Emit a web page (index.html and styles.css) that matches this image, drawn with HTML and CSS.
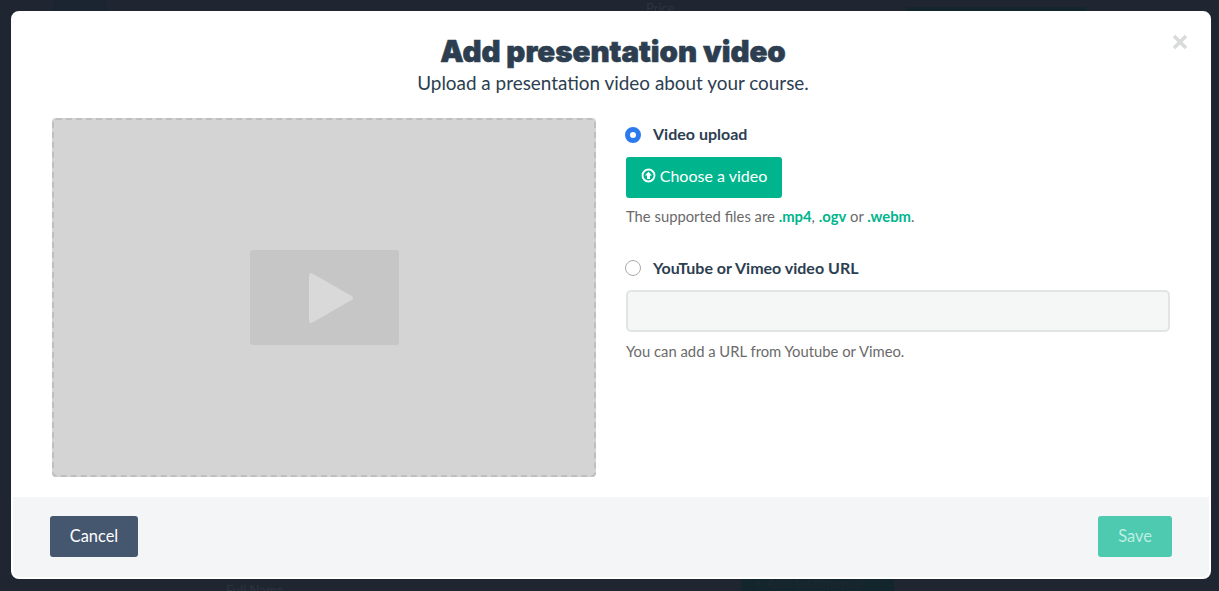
FILE: index.html
```html
<!DOCTYPE html>
<html lang="en">
<head>
<meta charset="UTF-8" />
<meta name="viewport" content="width=device-width, initial-scale=1.0" />
<title>Add presentation video</title>
<link rel="stylesheet" href="styles.css">
</head>
<body>

<!-- page behind the backdrop -->
<div class="behind">
  <div class="behind-avatar"></div>
  <span class="behind-price">Price</span>
  <div class="behind-top-btn"></div>
  <span class="behind-name">Full Name</span>
  <div class="behind-add-btn">+ Add testimonial</div>
</div>

<div class="modal">
  <button class="modal-close" aria-label="Close">
    <svg width="16" height="16" viewBox="0 0 16 16"><path d="M2 2 14 14M14 2 2 14" /></svg>
  </button>

  <div class="modal-head">
    <h1>Add presentation video</h1>
    <p>Upload a presentation video about your course.</p>
  </div>

  <div class="modal-body">
    <div class="preview">
      <div class="preview-thumb">
        <svg width="46" height="52" viewBox="0 0 46 52"><path d="M3 3 43 26 3 49Z" /></svg>
      </div>
    </div>

    <div class="options">
      <label class="option option-upload">
        <span class="radio radio-on"></span>
        Video upload
      </label>
      <button class="btn btn-green btn-choose">
        <svg width="15" height="15" viewBox="0 0 15 15">
          <circle cx="7.5" cy="7.5" r="6" />
          <path class="arrow" d="M7.5 3.8 11 7.5H9V11H6V7.5H4Z" />
        </svg>
        Choose a video
      </button>
      <p class="hint hint-types">The supported files are <b>.mp4</b>, <b>.ogv</b> or <b>.webm</b>.</p>

      <label class="option option-url">
        <span class="radio"></span>
        YouTube or Vimeo video URL
      </label>
      <input class="url-input" type="text" />
      <p class="hint">You can add a URL from Youtube or Vimeo.</p>
    </div>
  </div>

  <div class="modal-foot">
    <button class="btn btn-dark">Cancel</button>
    <button class="btn btn-save">Save</button>
  </div>
</div>

</body>
</html>
```

FILE: styles.css
```css
* {
  box-sizing: border-box;
}
html, body {
  height: 100%;
}
body {
  margin: 0;
  background-color: #1f2631;
  font-family: "Lato", "Open Sans", sans-serif;
  color: #2c3e50;
  overflow: hidden;
}

/* page behind the backdrop */
.behind-avatar {
  position: absolute;
  left: 53px;
  top: -20px;
  width: 54px;
  height: 54px;
  border-radius: 50%;
  background-color: #1b2531;
}
.behind-price {
  position: absolute;
  left: 646px;
  top: 0;
  font-size: 13px;
  color: #2c3440;
}
.behind-top-btn {
  position: absolute;
  left: 905px;
  top: 7px;
  width: 182px;
  height: 30px;
  border-radius: 4px;
  background-color: #13262e;
}
.behind-name {
  position: absolute;
  left: 226px;
  top: 582px;
  font-size: 13px;
  color: #2c3440;
}
.behind-add-btn {
  position: absolute;
  left: 741px;
  top: 570px;
  width: 153px;
  height: 30px;
  padding-left: 14px;
  background-color: #13262e;
  color: #1f2631;
  font-size: 14px;
  line-height: 26px;
}

.modal {
  position: absolute;
  left: 11px;
  top: 11px;
  width: 1200px;
  height: 568px;
  display: flex;
  flex-direction: column;
  background-color: #fff;
  border: 2px solid #fff;
  border-radius: 8px;
}
.modal-close {
  position: absolute;
  right: 21px;
  top: 21px;
  width: 16px;
  height: 16px;
  padding: 0;
  border: none;
  background: none;
}
.modal-close svg {
  display: block;
}
.modal-close path {
  stroke: #d8dadb;
  stroke-width: 3.6;
  fill: none;
}

.modal-head {
  height: 105px;
  padding: 20px 0 0 4px;
  text-align: center;
}
.modal-head h1 {
  margin: 0 0 1px;
  font-family: "Inter", "Lato", sans-serif;
  font-size: 29.5px;
  line-height: 36px;
  font-weight: 900;
  -webkit-text-stroke: 0.6px #2c3e50;
  color: #2c3e50;
}
.modal-head p {
  margin: 0;
  font-size: 18.9px;
  line-height: 26px;
  color: #2c3e50;
}

.modal-body {
  flex: 1;
  display: flex;
  gap: 30px;
  padding: 0 39px;
}
.preview {
  width: 544px;
  height: 359px;
  display: flex;
  align-items: center;
  justify-content: center;
  background-color: #d4d4d4;
  border: 2px dashed #bfbfbf;
  border-radius: 4px;
}
.preview-thumb {
  width: 149px;
  height: 95px;
  display: flex;
  align-items: center;
  justify-content: center;
  padding-left: 13px;
  background-color: #c6c6c6;
  border-radius: 3px;
}
.preview-thumb svg {
  display: block;
}
.preview-thumb path {
  fill: #d9d9d9;
  stroke: #d9d9d9;
  stroke-width: 4;
  stroke-linejoin: round;
}

.options {
  width: 544px;
}
.option {
  display: flex;
  align-items: center;
  gap: 12px;
  height: 20px;
  font-size: 16px;
  font-weight: 700;
  color: #2c3e50;
}
.option-upload {
  margin: 5px 0 14px -1px;
}
.option-url {
  margin: 31px 0 13px -1px;
}
.radio {
  width: 16px;
  height: 16px;
  margin-top: 2px;
  border-radius: 50%;
  background-color: #fff;
  border: 1px solid #aaa;
}
.radio-on {
  margin-top: 4px;
  background-color: #fff;
  border: 5px solid #2b7af0;
}

.btn {
  height: 41px;
  border: none;
  border-radius: 3px;
  font-family: inherit;
  font-size: 16.4px;
  color: #fff;
}
.btn-green {
  background-color: #00b58d;
}
.btn-choose {
  width: 156px;
  display: flex;
  align-items: center;
  justify-content: center;
  gap: 4px;
  padding: 0 0 4px;
  font-size: 16px;
}
.btn-choose svg {
  display: block;
}
.btn-choose circle {
  fill: none;
  stroke: #fff;
  stroke-width: 1.8;
}
.btn-choose .arrow {
  fill: #fff;
}
.btn-dark {
  width: 88px;
  padding: 0 0 2px;
  background-color: #45566f;
}
.btn-save {
  width: 74px;
  padding: 0 0 2px;
  background-color: #4dcab0;
  color: #bdeee2;
}

.hint {
  margin: 9px 0 0;
  font-size: 14.8px;
  line-height: 20px;
  color: #6a6a6a;
}
.hint-types {
  margin-top: 8px;
}
.hint b {
  color: #00b58d;
}
.url-input {
  display: block;
  width: 100%;
  height: 42px;
  background-color: #f5f7f6;
  border: 2px solid #e1e5e4;
  border-radius: 5px;
}

.modal-foot {
  height: 80px;
  display: flex;
  align-items: flex-start;
  justify-content: space-between;
  padding: 19px 37px 0;
  background-color: #f4f5f7;
  border-radius: 0 0 6px 6px;
}
```
